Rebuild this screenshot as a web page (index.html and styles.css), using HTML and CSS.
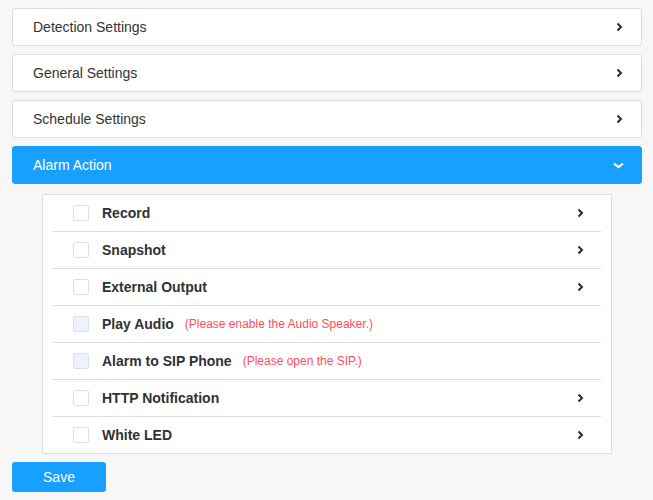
FILE: index.html
```html
<!DOCTYPE html>
<html>
<head>
<meta charset="utf-8">
<link rel="stylesheet" href="styles.css">
</head>
<body>
<div class="page">
  <div class="panel">
    <span class="panel-title">Detection Settings</span>
    <svg class="chev" width="7" height="10" viewBox="0 0 7 10"><polyline points="1.5,1.5 5,5 1.5,8.5" fill="none" stroke="#1f2d3d" stroke-width="2"/></svg>
  </div>
  <div class="panel">
    <span class="panel-title">General Settings</span>
    <svg class="chev" width="7" height="10" viewBox="0 0 7 10"><polyline points="1.5,1.5 5,5 1.5,8.5" fill="none" stroke="#1f2d3d" stroke-width="2"/></svg>
  </div>
  <div class="panel">
    <span class="panel-title">Schedule Settings</span>
    <svg class="chev" width="7" height="10" viewBox="0 0 7 10"><polyline points="1.5,1.5 5,5 1.5,8.5" fill="none" stroke="#1f2d3d" stroke-width="2"/></svg>
  </div>
  <div class="panel active">
    <span class="panel-title">Alarm Action</span>
    <svg class="chev-down" width="11" height="7" viewBox="0 0 11 7"><polyline points="1,1.5 5.5,5 10,1.5" fill="none" stroke="#ffffff" stroke-width="2.2"/></svg>
  </div>
  <div class="actions">
    <div class="row">
      <span class="cb"></span><span class="label">Record</span>
      <svg class="chev" width="7" height="10" viewBox="0 0 7 10"><polyline points="1.5,1.5 5,5 1.5,8.5" fill="none" stroke="#1f2d3d" stroke-width="2"/></svg>
    </div>
    <div class="row">
      <span class="cb"></span><span class="label">Snapshot</span>
      <svg class="chev" width="7" height="10" viewBox="0 0 7 10"><polyline points="1.5,1.5 5,5 1.5,8.5" fill="none" stroke="#1f2d3d" stroke-width="2"/></svg>
    </div>
    <div class="row">
      <span class="cb"></span><span class="label">External Output</span>
      <svg class="chev" width="7" height="10" viewBox="0 0 7 10"><polyline points="1.5,1.5 5,5 1.5,8.5" fill="none" stroke="#1f2d3d" stroke-width="2"/></svg>
    </div>
    <div class="row">
      <span class="cb disabled"></span><span class="label">Play Audio</span><span class="hint">(Please enable the Audio Speaker.)</span>
    </div>
    <div class="row">
      <span class="cb disabled"></span><span class="label">Alarm to SIP Phone</span><span class="hint">(Please open the SIP.)</span>
    </div>
    <div class="row">
      <span class="cb"></span><span class="label">HTTP Notification</span>
      <svg class="chev" width="7" height="10" viewBox="0 0 7 10"><polyline points="1.5,1.5 5,5 1.5,8.5" fill="none" stroke="#1f2d3d" stroke-width="2"/></svg>
    </div>
    <div class="row">
      <span class="cb"></span><span class="label">White LED</span>
      <svg class="chev" width="7" height="10" viewBox="0 0 7 10"><polyline points="1.5,1.5 5,5 1.5,8.5" fill="none" stroke="#1f2d3d" stroke-width="2"/></svg>
    </div>
  </div>
  <button class="save">Save</button>
</div>
</body>
</html>
```
FILE: styles.css
```css
html, body {
  margin: 0;
  padding: 0;
  background: #f7f7f7;
  font-family: "Liberation Sans", Arial, sans-serif;
}
.page {
  width: 630px;
  padding: 8px 0 0 12px;
  display: flex;
  flex-direction: column;
}
.panel {
  height: 36px;
  border: 1px solid #dcdcdc;
  border-radius: 3px;
  background: #fff;
  display: flex;
  align-items: center;
  padding: 0 18px 0 20px;
  margin-bottom: 8px;
  color: #333;
  font-size: 14px;
}
.panel-title {
  flex: 1;
}
.panel.active {
  background: #18a0ff;
  border-color: #18a0ff;
  color: #fff;
  margin-bottom: 10px;
}
.chev {
  display: block;
}
.chev-down {
  display: block;
  margin-right: -1px;
}
.actions {
  margin: 0 30px;
  border: 1px solid #dcdcdc;
  background: #fff;
  padding: 0 10px;
}
.row {
  height: 36px;
  display: flex;
  align-items: center;
  padding: 0 17px 0 20px;
  border-bottom: 1px solid #dcdcdc;
}
.row:last-child {
  border-bottom: none;
}
.cb {
  width: 14px;
  height: 14px;
  border: 1px solid #dcdfe6;
  border-radius: 2px;
  background: #fff;
  margin-right: 13px;
  flex: none;
}
.cb.disabled {
  background: #edf2fc;
}
.label {
  font-weight: bold;
  font-size: 14px;
  color: #303133;
}
.hint {
  margin-left: 11px;
  font-size: 12px;
  color: #ff4d5a;
}
.row .chev {
  margin-left: auto;
}
.save {
  margin-top: 8px;
  width: 94px;
  height: 30px;
  border: none;
  border-radius: 3px;
  background: #18a0ff;
  color: #fff;
  font-family: "Liberation Sans", Arial, sans-serif;
  font-size: 14px;
  padding: 0;
}
```
